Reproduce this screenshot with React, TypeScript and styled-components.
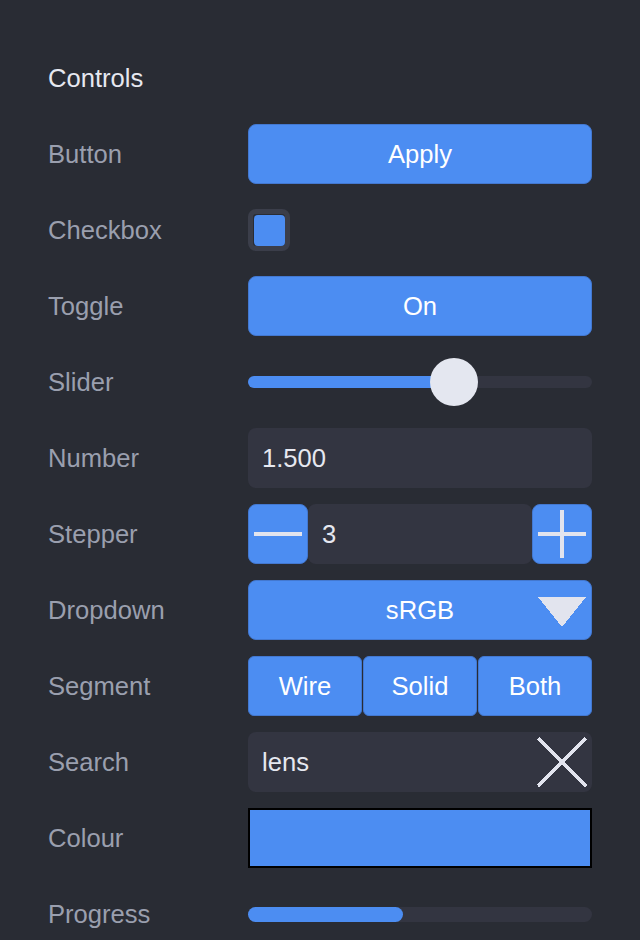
import styled, { createGlobalStyle } from "styled-components";

const colors = {
  bg: "#292c34",
  field: "#333541",
  blue: "#4c8df2",
  blueEdge: "#4378d0",
  label: "#9a9fae",
  text: "#e6e8f0",
  white: "#ffffff",
  icon: "#e2e4ee",
};

const GlobalStyle = createGlobalStyle`
  html, body {
    margin: 0;
    padding: 0;
    background: ${colors.bg};
  }
  body {
    font-family: "Liberation Sans", Arial, sans-serif;
  }
`;

const Panel = styled.div`
  width: 640px;
  height: 940px;
  box-sizing: border-box;
  padding: 48px 48px 0;
  background: ${colors.bg};
  display: grid;
  grid-template-columns: 200px 1fr;
  grid-auto-rows: 60px;
  row-gap: 16px;
  overflow: hidden;
`;

const Title = styled.div`
  grid-column: 1 / span 2;
  display: flex;
  align-items: center;
  font-size: 25.6px;
  color: ${colors.text};
`;

const Label = styled.div`
  display: flex;
  align-items: center;
  font-size: 25.6px;
  color: ${colors.label};
`;

const Cell = styled.div`
  display: flex;
  align-items: center;
  min-width: 0;
`;

const BlueButton = styled.div<{ $radius?: number }>`
  flex: 1;
  height: 60px;
  box-sizing: border-box;
  border: 1px solid ${colors.blueEdge};
  border-radius: ${(p) => p.$radius ?? 8}px;
  background: ${colors.blue};
  color: ${colors.white};
  font-size: 25.6px;
  display: flex;
  align-items: center;
  justify-content: center;
  position: relative;
`;

const CheckOuter = styled.div`
  width: 42px;
  height: 42px;
  box-sizing: border-box;
  border: 5px solid #3b3e4a;
  border-radius: 8px;
  background: ${colors.bg};
  display: flex;
  align-items: center;
  justify-content: center;
`;

const CheckInner = styled.div`
  width: 31px;
  height: 31px;
  border-radius: 4px;
  background: ${colors.blue};
`;

const Track = styled.div<{ $h: number }>`
  flex: 1;
  height: ${(p) => p.$h}px;
  border-radius: ${(p) => p.$h / 2}px;
  background: ${colors.field};
  position: relative;
`;

const Fill = styled.div`
  height: 100%;
  border-radius: inherit;
  background: ${colors.blue};
`;

const Thumb = styled.div`
  position: absolute;
  top: 50%;
  width: 48px;
  height: 48px;
  margin: -24px 0 0 -24px;
  border-radius: 50%;
  background: #e4e7f0;
`;

const Field = styled.div`
  flex: 1;
  height: 60px;
  box-sizing: border-box;
  padding: 0 14px;
  border-radius: 8px;
  background: ${colors.field};
  color: ${colors.text};
  font-size: 25.6px;
  display: flex;
  align-items: center;
  justify-content: space-between;
`;

const StepButton = styled.div`
  width: 60px;
  height: 60px;
  box-sizing: border-box;
  border: 1px solid ${colors.blueEdge};
  border-radius: 8px;
  background: ${colors.blue};
  display: flex;
  align-items: center;
  justify-content: center;
`;

const Segments = styled.div`
  flex: 1;
  display: flex;
  gap: 1px;
`;

const Caret = styled.svg`
  position: absolute;
  right: 5px;
  top: 16px;
`;

const Swatch = styled.div`
  flex: 1;
  height: 60px;
  box-sizing: border-box;
  border: 2px solid #000;
  background: ${colors.blue};
`;

const Minus = () => (
  <svg width="48" height="48" viewBox="0 0 48 48" shapeRendering="crispEdges">
    <rect x="0" y="22" width="48" height="4" fill={colors.icon} />
  </svg>
);

const Plus = () => (
  <svg width="48" height="48" viewBox="0 0 48 48" shapeRendering="crispEdges">
    <rect x="0" y="22" width="48" height="4" fill={colors.icon} />
    <rect x="22" y="0" width="4" height="48" fill={colors.icon} />
  </svg>
);

const Cross = () => (
  <svg width="50" height="50" viewBox="0 0 50 50" shapeRendering="crispEdges">
    <line x1="1" y1="1" x2="49" y2="49" stroke={colors.icon} strokeWidth="3" />
    <line x1="49" y1="1" x2="1" y2="49" stroke={colors.icon} strokeWidth="3" />
  </svg>
);

export default function App() {
  const slider = 0.55;
  const progress = 0.45;

  return (
    <>
      <GlobalStyle />
      <Panel>
        <Title>Controls</Title>

        <Label>Button</Label>
        <Cell>
          <BlueButton>Apply</BlueButton>
        </Cell>

        <Label>Checkbox</Label>
        <Cell>
          <CheckOuter>
            <CheckInner />
          </CheckOuter>
        </Cell>

        <Label>Toggle</Label>
        <Cell>
          <BlueButton>On</BlueButton>
        </Cell>

        <Label>Slider</Label>
        <Cell>
          <Track $h={12}>
            <Fill style={{ width: `${slider * 100}%` }} />
            <Thumb style={{ left: `${slider * 100 + 5}%` }} />
          </Track>
        </Cell>

        <Label>Number</Label>
        <Cell>
          <Field>1.500</Field>
        </Cell>

        <Label>Stepper</Label>
        <Cell>
          <StepButton>
            <Minus />
          </StepButton>
          <Field>3</Field>
          <StepButton>
            <Plus />
          </StepButton>
        </Cell>

        <Label>Dropdown</Label>
        <Cell>
          <BlueButton>
            sRGB
            <Caret width="48" height="30" viewBox="0 0 48 30" shapeRendering="crispEdges">
              <polygon points="0,0 48,0 24,30" fill={colors.icon} />
            </Caret>
          </BlueButton>
        </Cell>

        <Label>Segment</Label>
        <Cell>
          <Segments>
            <BlueButton $radius={6}>Wire</BlueButton>
            <BlueButton $radius={6}>Solid</BlueButton>
            <BlueButton $radius={6}>Both</BlueButton>
          </Segments>
        </Cell>

        <Label>Search</Label>
        <Cell>
          <Field style={{ paddingRight: 5 }}>
            lens
            <Cross />
          </Field>
        </Cell>

        <Label>Colour</Label>
        <Cell>
          <Swatch />
        </Cell>

        <Label>Progress</Label>
        <Cell>
          <Track $h={15}>
            <Fill style={{ width: `${progress * 100}%` }} />
          </Track>
        </Cell>
      </Panel>
    </>
  );
}
